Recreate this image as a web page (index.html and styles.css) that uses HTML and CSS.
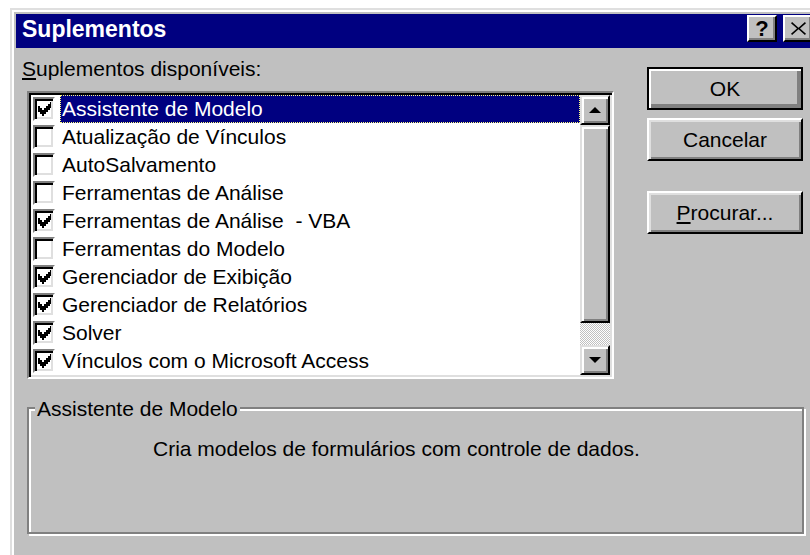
FILE: index.html
```html
<!DOCTYPE html>
<html lang="pt">
<head>
<meta charset="utf-8">
<title>Suplementos</title>
<link rel="stylesheet" href="styles.css">
</head>
<body>
<div class="window">
  <div class="titlebar">
    <span class="title">Suplementos</span>
    <div class="tb-buttons">
      <button class="tb-btn help">?</button>
      <button class="tb-btn close" aria-label="Fechar">
        <svg width="15" height="13" viewBox="0 0 14 12" aria-hidden="true">
          <path d="M1 0 L7 5.2 L13 0 L14 1.2 L8.4 6 L14 10.8 L13 12 L7 6.8 L1 12 L0 10.8 L5.6 6 L0 1.2 Z" fill="#000"/>
        </svg>
      </button>
    </div>
  </div>

  <div class="content">
    <div class="top">
      <div class="left">
        <div class="label"><u>S</u>uplementos disponíveis:</div>
        <div class="listbox">
          <ul class="items">
            <li class="item selected"><span class="check on"></span><span class="text">Assistente de Modelo</span></li>
            <li class="item"><span class="check"></span><span class="text">Atualização de Vínculos</span></li>
            <li class="item"><span class="check"></span><span class="text">AutoSalvamento</span></li>
            <li class="item"><span class="check"></span><span class="text">Ferramentas de Análise</span></li>
            <li class="item"><span class="check on"></span><span class="text">Ferramentas de Análise &nbsp;- VBA</span></li>
            <li class="item"><span class="check"></span><span class="text">Ferramentas do Modelo</span></li>
            <li class="item"><span class="check on"></span><span class="text">Gerenciador de Exibição</span></li>
            <li class="item"><span class="check on"></span><span class="text">Gerenciador de Relatórios</span></li>
            <li class="item"><span class="check on"></span><span class="text">Solver</span></li>
            <li class="item"><span class="check on"></span><span class="text">Vínculos com o Microsoft Access</span></li>
          </ul>
          <div class="scrollbar">
            <div class="sb-btn">
              <svg width="12" height="6" viewBox="0 0 12 6" aria-hidden="true"><path d="M6 0 L12 6 L0 6 Z" fill="#000"/></svg>
            </div>
            <div class="sb-thumb"></div>
            <div class="sb-track"></div>
            <div class="sb-btn">
              <svg width="12" height="6" viewBox="0 0 12 6" aria-hidden="true"><path d="M0 0 L12 0 L6 6 Z" fill="#000"/></svg>
            </div>
          </div>
        </div>
      </div>

      <div class="actions">
        <button class="btn default">OK</button>
        <button class="btn">Cancelar</button>
        <button class="btn browse"><u>P</u>rocurar...</button>
      </div>
    </div>

    <div class="group">
      <div class="group-label">Assistente de Modelo</div>
      <p class="desc">Cria modelos de formulários com controle de dados.</p>
    </div>
  </div>
</div>
</body>
</html>
```

FILE: styles.css
```css
* {
  box-sizing: border-box;
}

html,
body {
  margin: 0;
  height: 100%;
}

body {
  background: #fff;
  overflow: hidden;
  font-family: "Liberation Sans", Arial, sans-serif;
  font-size: 21px;
  color: #000;
}

/* Dialog frame */
.window {
  margin: 8px 0 0 10px;
  width: 811px;
  height: 560px;
  background: #c0c0c0;
  border-top: 2px solid #dfdfdf;
  border-left: 2px solid #dfdfdf;
  box-shadow: inset 2px 2px #fff;
  padding: 4px 6px 0 4px;
}

.titlebar {
  display: flex;
  align-items: flex-start;
  height: 34px;
  background: #000080;
  padding: 0 2px 0 6px;
}

.title {
  flex: 1;
  color: #fff;
  font-weight: bold;
  font-size: 23px;
  line-height: 30px;
}

.tb-buttons {
  display: flex;
  gap: 6px;
  margin-top: 1px;
}

.tb-btn {
  width: 30px;
  height: 27px;
  padding: 0;
  display: flex;
  align-items: center;
  justify-content: center;
  background: #c0c0c0;
  border: 2px solid;
  border-color: #fff #000 #000 #fff;
  box-shadow: inset -2px -2px #808080;
  font-family: "Liberation Sans", Arial, sans-serif;
  font-weight: bold;
  font-size: 22px;
  line-height: 1;
  color: #000;
}

/* Dialog body */
.content {
  padding: 9px 0 0 6px;
}

.top {
  display: flex;
}

.label {
  line-height: 24px;
  height: 24px;
}

.listbox {
  display: flex;
  margin: 10px 0 0 5px;
  width: 587px;
  height: 288px;
  background: #fff;
  border: 2px solid;
  border-color: #808080 #fff #fff #808080;
  box-shadow: inset 2px 2px #000, inset -2px -2px #dfdfdf;
  padding: 2px;
}

.items {
  list-style: none;
  margin: 0;
  padding: 0;
  flex: 1;
}

.item {
  display: flex;
  align-items: flex-start;
  height: 28px;
}

.check {
  flex: none;
  width: 22px;
  height: 24px;
  margin: 2px 0 0 2px;
  background: #fff;
  border: 2px solid;
  border-color: #808080 #fff #fff #808080;
  box-shadow: inset 2px 2px #000, inset -2px -2px #dfdfdf;
}

/* Win95-style checkmark, 7x7 bitmap drawn at double size */
.check.on {
  background: #fff url("data:image/svg+xml,%3Csvg xmlns='http://www.w3.org/2000/svg' viewBox='0 0 7 7' shape-rendering='crispEdges'%3E%3Cpath d='M0 2H1V3H2V4H3V3H4V2H5V1H6V0H7V3H6V4H5V5H4V6H3V7H2V6H1V5H0Z' fill='%23000'/%3E%3C/svg%3E") no-repeat 2px 3px / 15px 14px;
}

.text {
  flex: 1;
  height: 28px;
  margin-left: 5px;
  padding-left: 2px;
  line-height: 28px;
  white-space: nowrap;
}

.item.selected .text {
  background: #000080;
  color: #fff;
  outline: 1px dotted #ffff80;
  outline-offset: -1px;
}

/* Vertical scrollbar */
.scrollbar {
  flex: none;
  width: 30px;
  display: flex;
  flex-direction: column;
}

.sb-btn,
.sb-thumb {
  background: #c0c0c0;
  border: 2px solid;
  border-color: #dfdfdf #000 #000 #dfdfdf;
  box-shadow: inset 2px 2px #fff, inset -2px -2px #808080;
}

.sb-btn {
  height: 30px;
  display: flex;
  align-items: center;
  justify-content: center;
}

.sb-thumb {
  height: 198px;
}

.sb-track {
  height: 22px;
  background: repeating-conic-gradient(#c0c0c0 0 25%, #fff 0 50%) 0 0 / 2px 2px;
}

/* Command buttons */
.actions {
  display: flex;
  flex-direction: column;
  width: 156px;
  margin: 10px 0 0 33px;
}

.btn {
  height: 43px;
  padding: 0;
  background: #c0c0c0;
  border: 2px solid;
  border-color: #fff #000 #000 #fff;
  box-shadow: inset 2px 2px #dfdfdf, inset -2px -2px #808080;
  font-family: "Liberation Sans", Arial, sans-serif;
  font-size: 21px;
  color: #000;
  text-align: center;
}

.btn + .btn {
  margin-top: 8px;
}

.btn.browse {
  margin-top: 30px;
}

.btn.default {
  border-color: #000;
  box-shadow: inset 2px 2px #fff, inset -2px -2px #808080, inset -4px -4px #808080;
}

/* Description group box */
.group {
  margin: 28px 0 0 5px;
  width: 777px;
  height: 127px;
  border: 2px solid #808080;
  box-shadow: inset 2px 2px #fff, 2px 2px #fff;
}

.group-label {
  width: fit-content;
  margin: -12px 0 0 6px;
  padding: 0 2px;
  background: #c0c0c0;
  line-height: 24px;
}

.desc {
  margin: 16px 0 0;
  padding-left: 124px;
  line-height: 24px;
}
```
